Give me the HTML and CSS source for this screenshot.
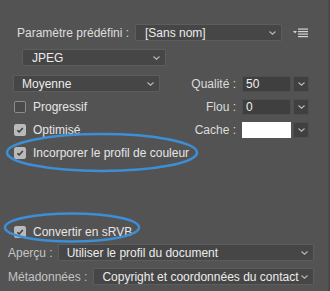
FILE: index.html
```html
<!DOCTYPE html>
<html lang="fr">
<head>
<meta charset="utf-8">
<link rel="stylesheet" href="styles.css">
</head>
<body>
<div class="panel">
  <div class="row preset">
    <span class="label">Paramètre prédéfini :</span>
    <div class="select preset-select"><span>[Sans nom]</span><svg class="chev" viewBox="0 0 7 4"><polyline points="0.5,0.5 3.5,3.2 6.5,0.5"/></svg></div>
    <svg class="menu-icon" viewBox="0 0 16 10"><polygon points="0,3 4,3 2,5.5" /><rect x="5" y="0.5" width="10" height="1.2"/><rect x="5" y="3" width="10" height="1.2"/><rect x="5" y="5.5" width="10" height="1.2"/><rect x="5" y="8" width="10" height="1.2"/></svg>
  </div>
  <div class="row format">
    <div class="select format-select"><span>JPEG</span><svg class="chev" viewBox="0 0 7 4"><polyline points="0.5,0.5 3.5,3.2 6.5,0.5"/></svg></div>
  </div>
  <div class="grid">
    <div class="select quality-select"><span>Moyenne</span><svg class="chev" viewBox="0 0 7 4"><polyline points="0.5,0.5 3.5,3.2 6.5,0.5"/></svg></div>
    <span class="rlabel">Qualité :</span>
    <div class="combo"><div class="field">50</div><div class="btn"><svg class="chev" viewBox="0 0 7 4"><polyline points="0.5,0.5 3.5,3.2 6.5,0.5"/></svg></div></div>

    <label class="check"><span class="box"></span>Progressif</label>
    <span class="rlabel">Flou :</span>
    <div class="combo"><div class="field">0</div><div class="btn"><svg class="chev" viewBox="0 0 7 4"><polyline points="0.5,0.5 3.5,3.2 6.5,0.5"/></svg></div></div>

    <label class="check"><span class="box on"><svg viewBox="0 0 12 12"><polyline points="2.8,6.2 5,8.4 9.4,3.6"/></svg></span>Optimisé</label>
    <span class="rlabel">Cache :</span>
    <div class="combo"><div class="field white"></div><div class="btn"><svg class="chev" viewBox="0 0 7 4"><polyline points="0.5,0.5 3.5,3.2 6.5,0.5"/></svg></div></div>

    <label class="check wide"><span class="box on"><svg viewBox="0 0 12 12"><polyline points="2.8,6.2 5,8.4 9.4,3.6"/></svg></span>Incorporer le profil de couleur</label>
  </div>
  <div class="row convert">
    <label class="check"><span class="box on"><svg viewBox="0 0 12 12"><polyline points="2.8,6.2 5,8.4 9.4,3.6"/></svg></span>Convertir en sRVB</label>
  </div>
  <div class="row line apercu">
    <span class="glabel">Aperçu :</span>
    <div class="select grow"><span>Utiliser le profil du document</span><svg class="chev" viewBox="0 0 7 4"><polyline points="0.5,0.5 3.5,3.2 6.5,0.5"/></svg></div>
  </div>
  <div class="row line meta">
    <span class="glabel">Métadonnées :</span>
    <div class="select grow"><span>Copyright et coordonnées du contact</span><svg class="chev" viewBox="0 0 7 4"><polyline points="0.5,0.5 3.5,3.2 6.5,0.5"/></svg></div>
  </div>
  <svg class="marks" viewBox="0 0 330 291">
    <ellipse cx="102" cy="152.5" rx="95" ry="18.5"/>
    <ellipse cx="72" cy="227.5" rx="67" ry="14"/>
  </svg>
</div>
</body>
</html>
```
FILE: styles.css
```css
html, body {
  margin: 0;
  padding: 0;
  background: #535353;
}
body {
  width: 330px;
  height: 291px;
  overflow: hidden;
  font-family: "Liberation Sans", Arial, sans-serif;
  font-size: 12px;
  color: #e2e2e2;
}
.panel {
  position: relative;
  width: 330px;
  height: 291px;
  padding-top: 24px;
  box-sizing: border-box;
  border-right: 2px solid #4a4a4a;
}
.row {
  display: flex;
  align-items: center;
}
.select {
  display: flex;
  align-items: center;
  justify-content: space-between;
  box-sizing: border-box;
  height: 17px;
  background: #464646;
  border: 1px solid #5d5d5d;
  border-radius: 1px;
  color: #ececec;
  white-space: nowrap;
  overflow: hidden;
}
.chev {
  width: 7px;
  height: 4px;
  flex: none;
  fill: none;
  stroke: #b8b8b8;
  stroke-width: 1.1;
}
.preset {
  height: 17px;
  padding-left: 17px;
}
.preset .label {
  width: 118px;
  color: #dedede;
}
.preset-select {
  width: 147px;
  padding: 0 5px 0 9px;
}
.menu-icon {
  width: 16px;
  height: 10px;
  margin-left: 11px;
  fill: #d6d6d6;
}
.format {
  margin-top: 8px;
  padding-left: 22px;
}
.format-select {
  width: 144px;
  padding: 0 5px 0 9px;
}
.grid {
  margin-top: 6px;
  display: grid;
  grid-template-columns: 147px 1fr 67px;
  grid-auto-rows: 23px;
  align-items: center;
  padding: 0 19px 0 13px;
}
.quality-select {
  padding: 0 5px 0 8px;
}
.rlabel {
  justify-self: end;
  padding-right: 6px;
  color: #dcdcdc;
}
.combo {
  display: flex;
  height: 16px;
  gap: 2px;
}
.field {
  box-sizing: border-box;
  width: 49px;
  height: 16px;
  background: #3f3f3f;
  border: 1px solid #4e4e4e;
  padding-left: 3px;
  line-height: 14px;
  color: #f0f0f0;
}
.field.white {
  background: #ffffff;
  border-color: #ffffff;
}
.btn {
  box-sizing: border-box;
  width: 16px;
  height: 16px;
  background: #404040;
  border: 1px solid #4e4e4e;
  display: flex;
  align-items: center;
  justify-content: center;
}
.check {
  display: flex;
  align-items: center;
  gap: 7px;
  margin-left: 1px;
  color: #e6e6e6;
  white-space: nowrap;
}
.check.wide {
  grid-column: 1 / -1;
}
.box {
  box-sizing: border-box;
  width: 12px;
  height: 12px;
  border: 1px solid #8c8c8c;
  border-radius: 2px;
  background: #4a4a4a;
  display: flex;
}
.box.on {
  background: #b9b9b9;
  border-color: #b9b9b9;
}
.box svg {
  width: 10px;
  height: 10px;
  fill: none;
  stroke: #3a3a3a;
  stroke-width: 1.8;
}
.convert {
  margin-top: 56px;
  height: 23px;
  padding-left: 13px;
}
.line {
  padding: 0 14px 0 8px;
  gap: 5px;
}
.apercu {
  margin-top: 1px;
}
.meta {
  margin-top: 7px;
  gap: 6px;
}
.glabel {
  color: #c4c4c4;
  white-space: nowrap;
}
.grow {
  flex: 1;
  padding: 0 5px 0 8px;
}
.marks {
  position: absolute;
  left: 0;
  top: 0;
  width: 330px;
  height: 291px;
  fill: none;
  stroke: #3d8ed4;
  stroke-width: 2.6;
  pointer-events: none;
}
```
